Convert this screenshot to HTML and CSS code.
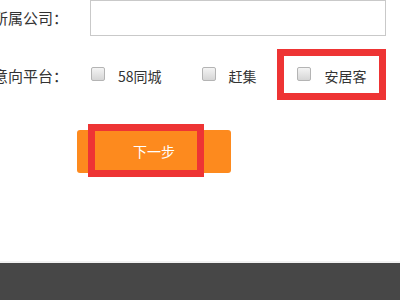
FILE: index.html
```html
<!DOCTYPE html>
<html>
<head>
<meta charset="utf-8">
<link rel="stylesheet" href="styles.css">
</head>
<body>
<div class="page">
  <div class="form">
    <div class="row row-company">
      <div class="label">所属公司：</div>
      <div class="field"><div class="input"></div></div>
    </div>
    <div class="row row-platform">
      <div class="label">意向平台：</div>
      <div class="field options">
        <label class="opt opt-58"><span class="cb"></span><span class="txt">58同城</span></label>
        <label class="opt opt-ganji"><span class="cb"></span><span class="txt">赶集</span></label>
        <label class="opt opt-anjuke"><span class="cb"></span><span class="txt">安居客</span></label>
      </div>
    </div>
    <div class="btn-row">
      <div class="btn">下一步</div>
    </div>
    <div class="mark mark-anjuke"></div>
    <div class="mark mark-btn"></div>
  </div>
  <div class="footer"></div>
</div>
</body>
</html>
```

FILE: styles.css
```css
html, body {
  margin: 0;
  padding: 0;
  background: #fff;
  width: 400px;
  height: 300px;
  overflow: hidden;
  font-family: "Noto Sans CJK SC", "Noto Sans", sans-serif;
  color: #333;
}
.page {
  display: flex;
  flex-direction: column;
  height: 300px;
}
.form {
  position: relative;
  height: 261px;
  border-bottom: 2px solid #f2f2f2;
}
.row {
  display: flex;
  align-items: center;
  margin-left: -10px;
}
.label {
  width: 78px;
  flex: none;
  text-align: right;
  font-size: 15px;
  line-height: 20px;
  white-space: nowrap;
  color: #333;
}
.field {
  margin-left: 22px;
}
.row-company {
  height: 36px;
}
.input {
  width: 294px;
  height: 34px;
  border: 1px solid #c9c9c9;
  background: #fff;
}
.row-platform {
  margin-top: 20px;
  height: 40px;
}
.options {
  display: flex;
  align-items: center;
}
.opt {
  display: flex;
  align-items: center;
  font-size: 14px;
  line-height: 20px;
  color: #333;
}
.cb {
  width: 12px;
  height: 12px;
  border: 1px solid #b4b4b4;
  border-radius: 2px;
  background: linear-gradient(#f4f4f4, #d6d6d6);
  margin-top: -4px;
}
.txt {
  margin-left: 13px;
}
.opt-58 {
  margin-left: 1px;
}
.opt-ganji {
  margin-left: 40px;
}
.opt-anjuke {
  margin-left: 40px;
}
.opt-anjuke .txt {
  margin-left: 14px;
}
.btn-row {
  margin-top: 34px;
  padding-left: 77px;
}
.btn {
  width: 154px;
  height: 43px;
  background: #fd8a1e;
  border-radius: 3px;
  color: #fff;
  font-size: 14px;
  line-height: 43px;
  text-align: center;
}
.mark {
  position: absolute;
  border: 7px solid #ee3434;
  box-sizing: border-box;
}
.mark-anjuke {
  left: 277px;
  top: 49px;
  width: 109px;
  height: 51px;
}
.mark-btn {
  left: 88px;
  top: 124px;
  width: 116px;
  height: 53px;
}
.footer {
  flex: 1;
  background: #474747;
}
```
